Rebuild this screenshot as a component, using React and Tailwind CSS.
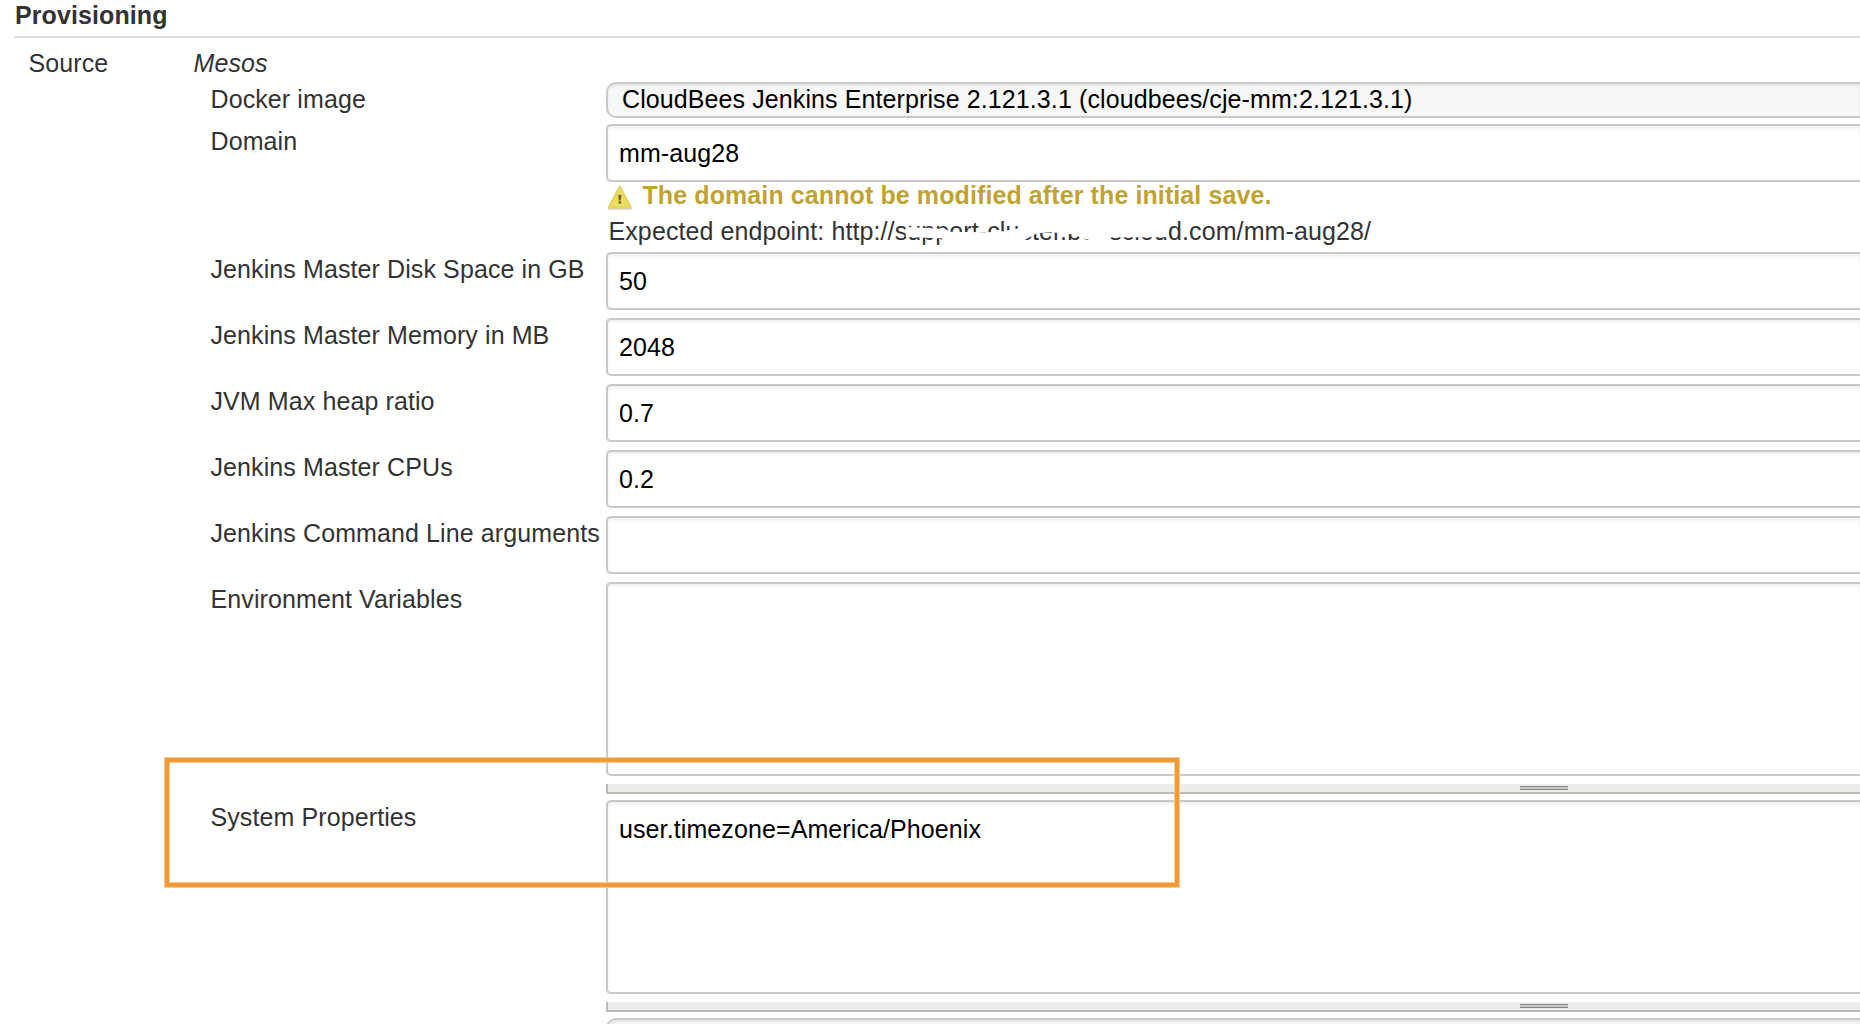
const fieldBox =
  "w-full border-2 border-r-0 border-[#c9c9c9] bg-white text-black shadow-[inset_0_2px_3px_rgba(0,0,0,0.07)] rounded-l-[5px]";

function Row({ label, className = "", children }) {
  return (
    <div className={`flex items-start ${className}`}>
      <div className="w-[395.5px] shrink-0 whitespace-nowrap pt-1">{label}</div>
      <div className="min-w-0 flex-1">{children}</div>
    </div>
  );
}

function TextField({ value = "" }) {
  return <div className={`${fieldBox} h-[58px] pt-3.5 pl-[11px]`}>{value}</div>;
}

function TextArea({ value = "" }) {
  return (
    <div>
      <div className={`${fieldBox} h-[194px] pt-3.5 pl-[11px]`}>{value}</div>
      <div className="mt-2 flex h-2.5 border-b-2 border-l-2 border-[#babab2] bg-[#ededed] pt-0.5 pl-[912px]">
        <div className="h-1 w-12 border-y border-[#868686] bg-[#c8c8c0]" />
      </div>
    </div>
  );
}

function WarningIcon() {
  return (
    <svg width="26" height="26" viewBox="0 0 26 26" className="shrink-0">
      <defs>
        <linearGradient id="warn" x1="0" y1="0" x2="0" y2="1">
          <stop offset="0" stopColor="#efe08a" />
          <stop offset="0.45" stopColor="#ecd94e" />
          <stop offset="1" stopColor="#f0e26a" />
        </linearGradient>
      </defs>
      <path d="M1.8 24.8h22" stroke="#bbb48a" strokeWidth="2" strokeLinecap="round" opacity="0.6" />
      <path d="M12.8 2.8 23.6 23H2Z" fill="url(#warn)" stroke="#e6d562" strokeWidth="2.4" strokeLinejoin="round" />
      <path d="M11.2 11h3.2l-.6 5.4h-2ZM11.5 17.3h2.6v2.4h-2.6Z" fill="#6b6538" />
    </svg>
  );
}

export default function App() {
  return (
    <div className="relative h-[1024px] w-full overflow-hidden bg-white pt-0.5 pl-3.5 font-['Liberation_Sans',Arial,sans-serif] text-[25px] leading-[26px] tracking-[0.1px] text-[#333]">
      <h1 className="border-b-2 border-[#dfdfdf] pb-2 pl-px font-bold">Provisioning</h1>
      <div className="mt-3 flex">
        <div className="w-[164px] shrink-0 pl-[14.5px]">Source</div>
        <div className="italic pl-[15.5px]">Mesos</div>
      </div>
      <div className="pt-1.5 pl-[196.5px]">
        <Row label="Docker image" className="mb-1.5">
          <div className="h-9 w-full rounded-l-[10px] border-2 border-r-0 border-[#c9c9c9] bg-[#f7f7f7] pt-0.5 pl-3.5 text-black shadow-[inset_0_2px_3px_rgba(0,0,0,0.07)]">
            CloudBees Jenkins Enterprise 2.121.3.1 (cloudbees/cje-mm:2.121.3.1)
          </div>
        </Row>
        <Row label="Domain" className="mb-1.5">
          <TextField value="mm-aug28" />
          <div className="flex h-7 font-bold text-[#c1a332]">
            <div className="w-[36.5px] pt-0.5 pl-px">
              <WarningIcon />
            </div>
            The domain cannot be modified after the initial save.
          </div>
          <div className="relative mt-2 h-7 pl-[2.5px]">
            Expected endpoint: http://support-cluster.beescloud.com/mm-aug28/
            <svg className="absolute -top-[3px] left-[279px]" width="310" height="35" viewBox="0 0 930 105">
              <path
                d="M62 36 110 38 180 42 195 50 300 52 345 50 400 40 430 12 850 8 848 67 680 67 665 88 615 76 590 68 560 58 500 52 455 55 435 66 410 80 400 98 180 98 170 70 62 66Z"
                fill="#fff"
              />
            </svg>
          </div>
        </Row>
        <Row label="Jenkins Master Disk Space in GB" className="mb-2"><TextField value="50" /></Row>
        <Row label="Jenkins Master Memory in MB" className="mb-2"><TextField value="2048" /></Row>
        <Row label="JVM Max heap ratio" className="mb-2"><TextField value="0.7" /></Row>
        <Row label="Jenkins Master CPUs" className="mb-2"><TextField value="0.2" /></Row>
        <Row label="Jenkins Command Line arguments" className="mb-2"><TextField /></Row>
        <Row label="Environment Variables" className="mb-1.5"><TextArea /></Row>
        <Row label="System Properties" className="mb-1.5"><TextArea value="user.timezone=America/Phoenix" /></Row>
        <Row label="">
          <div className="h-9 w-full rounded-l-[10px] border-2 border-r-0 border-[#c9c9c9] bg-[#f7f7f7] shadow-[inset_0_2px_3px_rgba(0,0,0,0.07)]" />
        </Row>
      </div>
      <div className="pointer-events-none absolute top-[757px] left-[164px] h-[131px] w-[1016px] border border-[#f9cb93]">
        <div className="h-full w-full border-4 border-[#f29a38]">
          <div className="h-full w-full border border-[#f9cb93]" />
        </div>
      </div>
    </div>
  );
}
